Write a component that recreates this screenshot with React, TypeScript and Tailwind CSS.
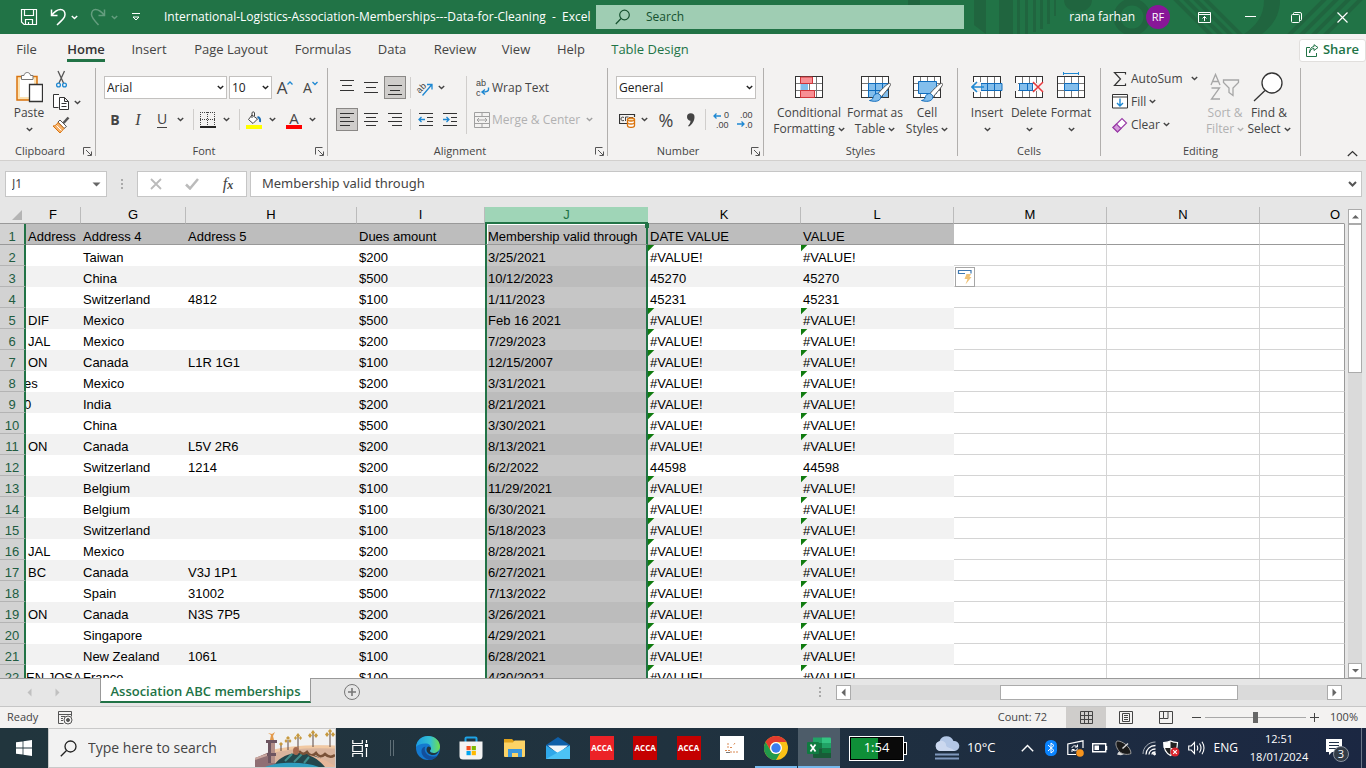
import type { ReactNode } from "react";

const UI = "font-['Open_Sans','Noto_Sans',sans-serif]";

type Row = { f?: string; g: string; h?: string; due: string; valid: string; date: string };

const ERR = "#VALUE!";

const ROWS: Row[] = [
  { g: "Taiwan", due: "$200", valid: "3/25/2021", date: ERR },
  { g: "China", due: "$500", valid: "10/12/2023", date: "45270" },
  { g: "Switzerland", h: "4812", due: "$100", valid: "1/11/2023", date: "45231" },
  { f: "DIF", g: "Mexico", due: "$500", valid: "Feb 16 2021", date: ERR },
  { f: "JAL", g: "Mexico", due: "$200", valid: "7/29/2023", date: ERR },
  { f: "ON", g: "Canada", h: "L1R 1G1", due: "$100", valid: "12/15/2007", date: ERR },
  { f: "es", g: "Mexico", due: "$200", valid: "3/31/2021", date: ERR },
  { f: "0", g: "India", due: "$200", valid: "8/21/2021", date: ERR },
  { g: "China", due: "$500", valid: "3/30/2021", date: ERR },
  { f: "ON", g: "Canada", h: "L5V 2R6", due: "$200", valid: "8/13/2021", date: ERR },
  { g: "Switzerland", h: "1214", due: "$200", valid: "6/2/2022", date: "44598" },
  { g: "Belgium", due: "$100", valid: "11/29/2021", date: ERR },
  { g: "Belgium", due: "$100", valid: "6/30/2021", date: ERR },
  { g: "Switzerland", due: "$100", valid: "5/18/2023", date: ERR },
  { f: "JAL", g: "Mexico", due: "$200", valid: "8/28/2021", date: ERR },
  { f: "BC", g: "Canada", h: "V3J 1P1", due: "$200", valid: "6/27/2021", date: ERR },
  { g: "Spain", h: "31002", due: "$500", valid: "7/13/2022", date: ERR },
  { f: "ON", g: "Canada", h: "N3S 7P5", due: "$200", valid: "3/26/2021", date: ERR },
  { g: "Singapore", due: "$200", valid: "4/29/2021", date: ERR },
  { g: "New Zealand", h: "1061", due: "$100", valid: "6/28/2021", date: ERR },
  { f: "EN JOSA", g: "France", due: "$100", valid: "4/30/2021", date: ERR },
];

// text that runs in from the column scrolled off on the left
const SPILL: Record<string, string> = { es: "-ml-1", "0": "-ml-1", "EN JOSA": "-ml-0.5" };

function Chevron({ className = "text-[#444]" }: { className?: string }) {
  return (
    <svg width="7" height="5" viewBox="0 0 7 5" className={`shrink-0 ${className}`}>
      <path d="M.8 .9 3.5 3.5 6.2 .9" fill="none" stroke="currentColor" strokeWidth="1.4" />
    </svg>
  );
}

function Tri({ d, className = "text-[#666]" }: { d: string; className?: string }) {
  return (
    <svg width="9" height="9" viewBox="0 0 9 9" className={className}>
      <path d={d} fill="currentColor" />
    </svg>
  );
}

const UP = "M1 6.5h7L4.500 3z";
const DOWN = "M1 3h7L4.500 6.500z";
const LEFT = "M6.500 .5v8L2.500 4.500z";
const RIGHT = "M2.500 .5v8L6.500 4.500z";

function Launcher() {
  return (
    <button aria-label="More options" className="text-[#555]">
      <svg width="9" height="9" viewBox="0 0 9 9" fill="none" stroke="currentColor">
        <path d="M.5 7.500V.5H7.500M3 3l5 5M8.500 4.500v4h-4" />
      </svg>
    </button>
  );
}

function Group({
  title,
  width,
  launcher,
  children,
}: {
  title: string;
  width: string;
  launcher?: boolean;
  children: ReactNode;
}) {
  return (
    <>
      <section className={`flex shrink-0 flex-col ${width}`}>
        <div className="h-[78px]">{children}</div>
        <div className="flex h-[17px] shrink-0 items-center text-[11px]">
          <span className="flex-1 text-center">{title}</span>
          {launcher && (
            <span className="mr-px flex w-[14px] justify-center">
              <Launcher />
            </span>
          )}
        </div>
      </section>
      <div className="mt-0.5 h-[88px] w-px shrink-0 bg-[#b1afad]" />
    </>
  );
}

function Big({
  icon,
  top,
  bottom = "",
  width,
  muted,
}: {
  icon: ReactNode;
  top: string;
  bottom?: string;
  width: string;
  muted?: boolean;
}) {
  return (
    <button
      className={`flex shrink-0 flex-col items-center pt-[5px] leading-4 whitespace-nowrap ${width} ${muted ? "text-[#b1b1b1]" : ""}`}
    >
      <span className="flex h-[34px] items-center">{icon}</span>
      <span>{top}</span>
      <span className={`flex h-4 items-center ${bottom ? "gap-[3px]" : ""}`}>
        {bottom}
        <Chevron className={muted ? "text-[#b1b1b1]" : "text-[#444]"} />
      </span>
    </button>
  );
}

function Tool({
  label,
  width = "w-6",
  active,
  children,
}: {
  label: string;
  width?: string;
  active?: boolean;
  children: ReactNode;
}) {
  return (
    <button
      aria-label={label}
      className={`flex h-[23px] shrink-0 items-center justify-center ${width} ${active ? "border border-[#8a8886] bg-[#cfcdcb]" : ""}`}
    >
      {children}
    </button>
  );
}

function Sep() {
  return <div className="h-[21px] w-px shrink-0 bg-[#d0cecc]" />;
}

function Combo({ label, value, width }: { label: string; value: string; width: string }) {
  return (
    <div className={`relative h-[23px] shrink-0 border border-[#c3c1bf] bg-white ${width}`}>
      <select
        aria-label={label}
        defaultValue={value}
        className="block h-full w-full appearance-none pl-0.5 text-xs text-[#222] outline-none"
      >
        <option>{value}</option>
      </select>
      <span className="pointer-events-none absolute top-0 right-0.5 flex h-full items-center">
        <Chevron className="text-[#222]" />
      </span>
    </div>
  );
}

function Lines({ d }: { d: string }) {
  return (
    <svg width="16" height="16" viewBox="0 0 16 16" stroke="#333" shapeRendering="crispEdges">
      <path d={d} fill="none" />
    </svg>
  );
}

// lettering that is part of a toolbar icon
function Glyph({ x, y, children, ...rest }: { x: number; y: number; children: string; transform?: string }) {
  return (
    <text x={x} y={y} fontSize="9" fill="#444" className="font-['Liberation_Sans',sans-serif]" {...rest}>
      {children}
    </text>
  );
}

function TableGlyph({ children }: { children: ReactNode }) {
  return (
    <svg width="32" height="32" viewBox="0 0 32 32" fill="none" className="shrink-0">
      <rect x="2.500" y="4.500" width="27" height="21" fill="#fff" stroke="#333" />
      <path d="M9.500 5v20M16.500 5v20M23.500 5v20M3 11.500h26M3 18.500h26" stroke="#777" />
      {children}
    </svg>
  );
}

function Brush() {
  return (
    <g>
      <path d="M31 11.500c1.500.5 1 2-8.500 13l-3.500-3C27.500 12 30 11 31 11.500Z" fill="#fff" stroke="#555" />
      <path d="M18.500 21.500c2.500.5 4 2.500 3 5-1.500 3-6 3.500-11 2 3-.5 3-1.500 4-4 .7-2 2-3 4-3Z" fill="#83beec" stroke="#0f6cbd" />
    </g>
  );
}

function TitleArt() {
  return (
    <svg
      viewBox="0 0 458 34"
      className="pointer-events-none absolute top-0 right-0 h-[34px] w-[458px]"
      fill="#20653f"
    >
      <path d="M0 0h12v5H0zM66 0h12v34l-12-9zM91 0h14v34H91zM109 0h3v34h-3zM117 0h3v34h-3zM125 0h3v32h-3zM132 0h3v29h-3zM139 0h3v24h-3zM146 0h2v16h-2z" />
      <path d="M156 0a14 12 0 0 0 28 0z" />
      <circle cx="224" cy="17" r="15" fill="none" stroke="#20653f" strokeWidth="7" />
      <g stroke="#20653f" strokeWidth="4">
        <path d="M266-2l40 40M276-2l40 40M286-2l40 40M296-2l40 40" />
        <path d="M380 36l40-40M392 36l40-40M404 36l40-40M416 36l40-40" />
      </g>
      <path d="M372 0c0 16-8 26-18 34h-18c12-8 20-18 20-34z" />
    </svg>
  );
}

function TitleBar() {
  return (
    <header className="relative flex h-[34px] shrink-0 items-center bg-[#217346] text-xs text-white">
      <TitleArt />
      <div className="flex w-[596px] shrink-0 items-center">
        <button aria-label="Save" className="ml-5">
          <svg width="18" height="18" viewBox="0 0 18 18" fill="none" stroke="#fff" strokeWidth="1.200">
            <path d="M1.500 1.500h15v15H4L1.500 14zM4.500 1.500v6h9v-6M5.500 16.500v-5h7v5M8.500 16.500v-2.500" />
          </svg>
        </button>
        <button aria-label="Undo" className="ml-3 flex items-center gap-1">
          <svg width="17" height="18" viewBox="0 0 17 18" fill="none" stroke="#fff" strokeWidth="1.500">
            <path d="M1.500 1.500v6h6M1.500 7.500C5 3 8 1.500 10.500 1.500c3 0 4.500 2.500 4.500 5 0 3-2 5-8 10.500" />
          </svg>
          <Chevron className="text-white" />
        </button>
        <button aria-label="Redo" className="ml-3 flex items-center gap-1 opacity-30">
          <svg width="17" height="18" viewBox="0 0 17 18" fill="none" stroke="#fff" strokeWidth="1.500">
            <path d="M14.500 1.500v6h-6M14.500 7.500C11 3 8 1.500 5.500 1.500 3 1.500 1.500 4 1.500 6.500c0 3 2 5 7 10.500" />
          </svg>
          <Chevron className="text-white" />
        </button>
        <button aria-label="Customize toolbar" className="ml-3.5">
          <svg width="8" height="8" viewBox="0 0 8 8" fill="none" stroke="#fff">
            <path d="M0 .5h8M1 4l3 3 3-3z" />
          </svg>
        </button>
        <h1 className="ml-6 whitespace-pre">
          International-Logistics-Association-Memberships---Data-for-Cleaning{"  -  "}Excel
        </h1>
      </div>
      <label className="relative flex h-6 w-[368px] shrink-0 items-center bg-[#9fcdb3] text-[#16512f]">
        <svg width="16" height="16" viewBox="0 0 16 16" fill="none" stroke="#16512f" strokeWidth="1.200" className="ml-[19px]">
          <circle cx="9.500" cy="6" r="4.800" />
          <path d="M6 9.500.8 15" />
        </svg>
        <input
          aria-label="Search"
          placeholder="Search"
          className="ml-[15px] w-40 bg-transparent outline-none placeholder:text-[#16512f]"
        />
      </label>
      <div className="relative ml-auto flex shrink-0 items-center">
        <span>rana farhan</span>
        <button className="ml-[11px] h-6 w-6 rounded-full bg-[#881798] text-[11px]">RF</button>
        <button aria-label="Ribbon display options" className="ml-7">
          <svg width="13" height="11" viewBox="0 0 13 11" fill="none" stroke="#fff">
            <path d="M.5.5h12v10H.5zM.5 2.500h12M6.500 9V4.500M4.500 6.500l2-2 2 2" />
          </svg>
        </button>
        <button aria-label="Minimize" className="ml-[34px]">
          <svg width="11" height="11" viewBox="0 0 11 11" stroke="#fff">
            <path d="M0 4.500h11" />
          </svg>
        </button>
        <button aria-label="Restore" className="ml-[35px]">
          <svg width="11" height="11" viewBox="0 0 11 11" fill="none" stroke="#fff">
            <path d="M2.500 2.500v-1q0-1 1-1h5.500q1.500 0 1.500 1.500v5.500q0 1-1 1h-1" />
            <rect x=".5" y="2.500" width="8" height="8" rx="1" />
          </svg>
        </button>
        <button aria-label="Close" className="mr-[18px] ml-[35px]">
          <svg width="11" height="11" viewBox="0 0 11 11" stroke="#fff" strokeWidth="1.200">
            <path d="M.5.5l10 10M10.500.5l-10 10" />
          </svg>
        </button>
      </div>
    </header>
  );
}

const TABS = [
  ["File", "w-[49px]"],
  ["Home", "w-[70px]"],
  ["Insert", "w-14"],
  ["Page Layout", "w-[108px]"],
  ["Formulas", "w-[76px]"],
  ["Data", "w-[62px]"],
  ["Review", "w-16"],
  ["View", "w-[58px]"],
  ["Help", "w-[52px]"],
  ["Table Design", "w-[106px]"],
];

function Tabs() {
  return (
    <nav className="flex h-8 shrink-0 items-center pl-0.5 text-[13px]">
      {TABS.map(([name, width]) => (
        <button
          key={name}
          className={`relative h-8 shrink-0 whitespace-nowrap ${width} ${name === "Home" ? "font-semibold text-[#333]" : ""} ${name === "Table Design" ? "text-[#217346]" : ""}`}
        >
          {name}
          {name === "Home" && (
            <span className="absolute inset-x-4 bottom-1 h-[3px] bg-[#217346]" />
          )}
        </button>
      ))}
      <button className="ml-auto flex h-[23px] items-center gap-1 rounded-[3px] border border-[#e1dfdd] bg-white px-1.5 font-semibold text-[#217346]">
        <svg width="13" height="13" viewBox="0 0 13 13" fill="none" stroke="#217346">
          <path d="M4 3.500H.5v9h10V9M3.500 9C4 6 5.500 4.500 8 4.500V6.500L12 3.500 8 .7V2.500C5 3 3.500 5 3.500 9Z" />
        </svg>
        Share
      </button>
    </nav>
  );
}

function Ribbon() {
  return (
    <div className="flex h-[95px] shrink-0 border-b border-[#d2d0ce] text-xs">
      <Group title="Clipboard" width="w-[95px]" launcher>
        <div className="flex">
          <Big
            width="w-[38px] ml-[10px]"
            top="Paste"
            icon={
              <svg width="28" height="32" viewBox="0 0 28 32" fill="none">
                <path d="M2 4.500h20V28H2z" fill="#fce3b4" stroke="#d9730d" strokeWidth="1.500" />
                <path d="M5 7h14v18H5z" fill="#fff" />
                <path d="M6.500 7.500v-4H9c.5-4 6-4 6.500 0h2.500v4z" fill="#fff" stroke="#777" />
                <path d="M14.500 12.500h13v17h-13z" fill="#fff" stroke="#333" strokeWidth="1.300" />
              </svg>
            }
          />
          <div className="ml-1 flex flex-col gap-[5px] pt-1">
            <button aria-label="Cut">
              <svg width="18" height="18" viewBox="0 0 18 18" fill="none">
                <path d="M6 1l5.500 12M12.500 1L7 13" stroke="#555" strokeWidth="1.300" />
                <circle cx="6.500" cy="15" r="1.900" stroke="#1e88d2" strokeWidth="1.300" />
                <circle cx="12.500" cy="15" r="1.900" stroke="#1e88d2" strokeWidth="1.300" />
              </svg>
            </button>
            <button aria-label="Copy" className="flex items-center gap-1">
              <svg width="18" height="18" viewBox="0 0 18 18" fill="#fff" stroke="#333">
                <path d="M6.500 14.500h-5V1.500h5.500" />
                <path d="M7.500 4.500h5l4 4v8h-9zM12.500 4.500v4h4M9.500 10.500h5M9.500 13.500h5" />
              </svg>
              <Chevron />
            </button>
            <button aria-label="Format painter">
              <svg width="18" height="18" viewBox="0 0 18 18" fill="none">
                <path d="M16.500 1.500L11.500 7" stroke="#555" strokeWidth="2.500" />
                <path d="M8 4l6.500 6.500-2.500 2L6 6z" fill="#fff" stroke="#555" />
                <path d="M6 6.500l6 6L8 17 1 10c2 0 4-1.500 5-3.500Z" fill="#f6b26b" stroke="#d9730d" />
                <path d="M4.500 9.500l5 5" stroke="#fff" />
              </svg>
            </button>
          </div>
        </div>
      </Group>

      <Group title="Font" width="w-[231px]" launcher>
        <div className="flex flex-col gap-[9px] pt-[10px] pl-2">
          <div className="flex items-center">
            <Combo label="Font" value="Arial" width="w-[123px]" />
            <span className="w-0.5" />
            <Combo label="Font size" value="10" width="w-[43px]" />
            <Tool label="Grow font" width="w-[26px]">
              <span className="text-[17px] leading-none">A</span>
              <svg width="6" height="16" viewBox="0 0 6 16" fill="none" stroke="#1e88d2" strokeWidth="1.300">
                <path d="M.5 4.500L3 2l2.500 2.500" />
              </svg>
            </Tool>
            <Tool label="Shrink font" width="w-[25px]">
              <span className="text-sm leading-none">A</span>
              <svg width="6" height="16" viewBox="0 0 6 16" fill="none" stroke="#1e88d2" strokeWidth="1.300">
                <path d="M.5 2L3 4.500 5.500 2" />
              </svg>
            </Tool>
          </div>
          <div className="flex items-center">
            <Tool label="Bold" width="w-[22px]">
              <b className="text-sm">B</b>
            </Tool>
            <Tool label="Italic">
              <i className="font-['Liberation_Serif',serif] text-base">I</i>
            </Tool>
            <Tool label="Underline">
              <span className="border-b border-[#444] text-sm leading-4">U</span>
            </Tool>
            <Tool label="Underline style" width="w-3">
              <Chevron />
            </Tool>
            <span className="w-[7px]" />
            <Sep />
            <Tool label="Borders" width="w-7">
              <svg width="16" height="16" viewBox="0 0 16 16" fill="none" shapeRendering="crispEdges">
                <path d="M.5 0v15M7.500 0v15M14.500 0v15M0 .5h15M0 7.500h15" stroke="#444" strokeDasharray="1 1" />
                <path d="M0 15h16" stroke="#222" strokeWidth="2" />
              </svg>
            </Tool>
            <Tool label="Border style" width="w-2">
              <Chevron />
            </Tool>
            <span className="w-[9px]" />
            <Sep />
            <Tool label="Fill color" width="w-7">
              <svg width="17" height="18" viewBox="0 0 17 18" fill="none">
                <path d="M6 4l5.500 4L7 12.500 2.500 8.500zM6 7V2c0-1.500 2.500-1.500 2.500 0v3" fill="#fff" stroke="#444" />
                <path d="M11.500 6c2 .5 3 2 2.500 5" stroke="#1e6fb5" strokeWidth="2" />
                <path d="M0 14h16v4H0z" fill="#ff0" />
              </svg>
            </Tool>
            <Tool label="Fill color options" width="w-2">
              <Chevron />
            </Tool>
            <span className="w-1" />
            <Tool label="Font color" width="w-7">
              <span className="flex w-4 flex-col items-center border-b-4 border-[#f00] text-[15px] leading-[14px]">A</span>
            </Tool>
            <Tool label="Font color options" width="w-2">
              <Chevron />
            </Tool>
          </div>
        </div>
      </Group>

      <Group title="Alignment" width="w-[279px]" launcher>
        <div className="flex pt-[10px] pl-2">
          <div className="flex flex-col gap-[9px]">
            <div className="flex items-center">
              <Tool label="Top align" width="w-[22px]">
                <Lines d="M1 .5h14M3 5.500h10M1 10.500h14" />
              </Tool>
              <span className="w-0.5" />
              <Tool label="Middle align" width="w-[22px]">
                <Lines d="M1 2.500h14M3 7.500h10M1 12.500h14" />
              </Tool>
              <span className="w-0.5" />
              <Tool label="Bottom align" width="w-[22px]" active>
                <Lines d="M1 5.500h14M3 10.500h10M1 14.500h14" />
              </Tool>
              <span className="w-1" />
              <Sep />
              <Tool label="Orientation" width="w-[27px]">
                <svg width="18" height="18" viewBox="0 0 18 18" fill="none" className="overflow-visible">
                  <Glyph x={0} y={12} transform="rotate(-45 5 9)">
                    ab
                  </Glyph>
                  <path d="M6.500 16.500L15.500 6M11 5.500h5v5" stroke="#1e88d2" strokeWidth="1.300" />
                </svg>
              </Tool>
              <Chevron />
            </div>
            <div className="flex items-center">
              <Tool label="Align left" width="w-[22px]" active>
                <Lines d="M1 1.500h14M1 5.500h10M1 9.500h14M1 13.500h10" />
              </Tool>
              <span className="w-0.5" />
              <Tool label="Center" width="w-[22px]">
                <Lines d="M1 1.500h14M3 5.500h10M1 9.500h14M3 13.500h10" />
              </Tool>
              <span className="w-0.5" />
              <Tool label="Align right" width="w-[22px]">
                <Lines d="M1 1.500h14M5 5.500h10M1 9.500h14M5 13.500h10" />
              </Tool>
              <span className="w-1" />
              <Sep />
              <Tool label="Decrease indent" width="w-[30px]">
                <svg width="16" height="16" viewBox="0 0 16 16" fill="none" stroke="#333">
                  <path d="M1 1.500h14M9 5.500h6M9 9.500h6M1 13.500h14" />
                  <path d="M1 7.500h6M3.500 5l-2.500 2.500L3.500 10" stroke="#1e88d2" strokeWidth="1.300" />
                </svg>
              </Tool>
              <Tool label="Increase indent" width="w-[18px]">
                <svg width="16" height="16" viewBox="0 0 16 16" fill="none" stroke="#333">
                  <path d="M1 1.500h14M9 5.500h6M9 9.500h6M1 13.500h14" />
                  <path d="M1 7.500h6M4.500 5l2.500 2.500L4.500 10" stroke="#1e88d2" strokeWidth="1.300" />
                </svg>
              </Tool>
            </div>
          </div>
          <div className="ml-[7px] h-[58px] w-px bg-[#d0cecc]" />
          <div className="ml-[7px] flex flex-col gap-[9px]">
            <button className="flex h-[23px] items-center gap-0.5 whitespace-nowrap">
              <svg width="16" height="18" viewBox="0 0 16 18" fill="none" className="overflow-visible">
                <Glyph x={2} y={7}>
                  ab
                </Glyph>
                <Glyph x={2} y={17}>
                  c
                </Glyph>
                <path d="M14.500 8.500v2c0 1.500-1 2.500-6 2.500M11 10.500L8 13l3 2.500" stroke="#1e88d2" strokeWidth="1.400" />
              </svg>
              Wrap Text
            </button>
            <button className="flex h-[23px] items-center gap-0.5 whitespace-nowrap text-[#b1b1b1]">
              <svg width="16" height="16" viewBox="0 0 16 16" fill="none" stroke="#a0a0a0">
                <path d="M.5.500h15v15H.5zM.5 4.500h15M.5 11.500h15M8 .5v4M8 11.500v4M3 8h10M5 6L3 8l2 2M11 6l2 2-2 2" />
              </svg>
              Merge &amp; Center
              <span className="ml-1">
                <Chevron className="text-[#a0a0a0]" />
              </span>
            </button>
          </div>
        </div>
      </Group>

      <Group title="Number" width="w-[155px]" launcher>
        <div className="flex flex-col gap-[9px] pt-[10px] pl-2">
          <Combo label="Number format" value="General" width="w-[140px]" />
          <div className="flex items-center">
            <Tool label="Accounting format" width="w-[22px]">
              <svg width="17" height="16" viewBox="0 0 17 16" fill="none">
                <path d="M8 11.500H.5v-9h15V5" stroke="#333" strokeWidth="1.200" />
                <path d="M5 5.500c-2-1-3 0-3 1.500S3 9 5 8.500M6.500 9V5h3M10 5.500h4" stroke="#444" />
                <path d="M8.500 7.500v6c0 2.500 7 2.500 7 0v-6" fill="#fff" stroke="#d9730d" strokeWidth="1.300" />
                <ellipse cx="12" cy="7.500" rx="3.500" ry="1.500" fill="#fce3b4" stroke="#d9730d" strokeWidth="1.300" />
                <path d="M8.500 10.500c0 2 7 2 7 0" stroke="#d9730d" strokeWidth="1.300" />
              </svg>
            </Tool>
            <Tool label="Accounting options" width="w-3">
              <Chevron />
            </Tool>
            <span className="w-0.5" />
            <Tool label="Percent style" width="w-7">
              <span className="text-lg leading-none">%</span>
            </Tool>
            <Tool label="Comma style" width="w-[22px]">
              <svg width="10" height="14" viewBox="0 0 10 14" fill="#444">
                <path d="M1 4a3.700 3.700 0 0 1 7.500 0c0 4-2.500 7.500-5.500 9.500L2 13c1.500-1.500 2.500-3.500 2.500-5.300C2.500 7.700 1 6 1 4Z" />
              </svg>
            </Tool>
            <span className="w-[3px]" />
            <Sep />
            <Tool label="Increase decimal" width="w-[30px]">
              <svg width="17" height="18" viewBox="0 0 17 18" fill="none" className="overflow-visible">
                <path d="M1 5h7M3.500 2.500L1 5l2.500 2.500" stroke="#1e88d2" strokeWidth="1.300" />
                <Glyph x={11} y={7}>
                  0
                </Glyph>
                <Glyph x={3} y={17}>
                  .00
                </Glyph>
              </svg>
            </Tool>
            <Tool label="Decrease decimal" width="w-[18px]">
              <svg width="17" height="18" viewBox="0 0 17 18" fill="none" className="overflow-visible">
                <path d="M0 13h7M4.500 10.500L7 13l-2.500 2.500" stroke="#1e88d2" strokeWidth="1.300" />
                <Glyph x={3} y={7}>
                  .00
                </Glyph>
                <Glyph x={8} y={17}>
                  .0
                </Glyph>
              </svg>
            </Tool>
          </div>
        </div>
      </Group>

      <Group title="Styles" width="w-[193px]">
        <div className="flex pl-[9px]">
          <Big
            width="w-[72px]"
            top="Conditional"
            bottom="Formatting"
            icon={
              <TableGlyph>
                <path d="M7.500 5h12v6.500h-12zM7.500 18.500h14V25.500h-14z" fill="#f88f94" stroke="#d13438" />
                <path d="M7.500 12h7.500v6H7.500z" fill="#83beec" />
              </TableGlyph>
            }
          />
          <Big
            width="w-[60px]"
            top="Format as"
            bottom="Table"
            icon={
              <TableGlyph>
                <path d="M10 12h19v13H10z" fill="#83beec" />
                <path d="M9.500 11.500h20M9.500 18.500h20M9.500 11.500v14M16.500 11.500v14M23.500 11.500v14" stroke="#0f6cbd" />
                <Brush />
              </TableGlyph>
            }
          />
          <Big
            width="w-11"
            top="Cell"
            bottom="Styles"
            icon={
              <TableGlyph>
                <path d="M7.500 9.500h18v12h-18z" fill="#83beec" stroke="#0f6cbd" />
                <Brush />
              </TableGlyph>
            }
          />
        </div>
      </Group>

      <Group title="Cells" width="w-[142px]">
        <div className="flex pl-2">
          <Big
            width="w-[42px]"
            top="Insert"
            icon={
              <TableGlyph>
                <path d="M10 11.500h21v7H10zM16.500 11.500v7M23.500 11.500v7" fill="#83beec" stroke="#0f6cbd" />
                <path d="M0 10h10v10H0z" fill="#f3f2f1" />
                <path d="M1 15h12M6 10l-5 5 5 5" stroke="#1e88d2" strokeWidth="1.600" />
              </TableGlyph>
            }
          />
          <Big
            width="w-[42px]"
            top="Delete"
            icon={
              <TableGlyph>
                <path d="M1 11h4v8H1zM21 11h11v8H21z" fill="#f3f2f1" />
                <path d="M6.500 11.500h13v7h-13zM14.500 11.500v7" fill="#83beec" stroke="#0f6cbd" />
                <path d="M20 10l10 10M30 10L20 20" stroke="#e8383d" strokeWidth="1.500" />
              </TableGlyph>
            }
          />
          <Big
            width="w-[42px]"
            top="Format"
            icon={
              <TableGlyph>
                <path d="M9.500 11.500h14v7h-14z" fill="#83beec" stroke="#0f6cbd" />
                <path d="M8.500 1.500h15M8.500 0v3M23.500 0v3" stroke="#1e88d2" />
              </TableGlyph>
            }
          />
        </div>
      </Group>

      <Group title="Editing" width="w-[199px]">
        <div className="flex">
          <div className="flex w-[98px] flex-col pt-px pl-[11px]">
            <button className="flex h-[23px] items-center whitespace-nowrap">
              <svg width="16" height="16" viewBox="0 0 16 16" fill="none" stroke="#333" strokeWidth="1.200">
                <path d="M13.500 3.500v-2h-11L8.500 8l-6 6.500h11v-2" />
              </svg>
              <span className="ml-[3px]">AutoSum</span>
              <span className="ml-2">
                <Chevron />
              </span>
            </button>
            <button className="flex h-[23px] items-center gap-[3px] whitespace-nowrap">
              <svg width="16" height="15" viewBox="0 0 16 15" fill="none">
                <path d="M.5.500h15v13.500H.5zM.5 3h15" fill="#fff" stroke="#333" />
                <path d="M8 4.500V12M5 9l3 3 3-3" stroke="#1e88d2" strokeWidth="1.400" />
              </svg>
              Fill
              <Chevron />
            </button>
            <button className="flex h-[23px] items-center gap-[3px] whitespace-nowrap">
              <svg width="16" height="16" viewBox="0 0 16 16" fill="#fff" stroke="#9b3fa8" strokeWidth="1.200">
                <path d="M1 10.500L10 1.500l4.500 4.500-9 9z" />
                <path d="M1 10.500L4.500 7 9 11.500 5.500 15z" fill="#d59bdc" />
              </svg>
              Clear
              <Chevron />
            </button>
          </div>
          <Big
            width="w-12 ml-[2px]"
            top="Sort &"
            bottom="Filter"
            muted
            icon={
              <svg width="32" height="32" viewBox="0 0 32 32" fill="none" stroke="#a6a6a6" strokeWidth="1.300">
                <path d="M2 13L6.500 2.500 11 13M3.500 9.500h6M2.500 16h8L2.500 27h8.500" />
                <path d="M14.500 8h15v2.500l-5.500 5.500v7.500l-4-3v-4.500L14.500 10.500z" />
              </svg>
            }
          />
          <Big
            width="w-11 -ml-0.5"
            top="Find &"
            bottom="Select"
            icon={
              <svg width="32" height="32" viewBox="0 0 32 32" fill="none" stroke="#333" strokeWidth="1.300">
                <circle cx="19" cy="11" r="10" fill="#fff" />
                <path d="M12 18.500L1 29" />
              </svg>
            }
          />
        </div>
      </Group>
      <button aria-label="Collapse ribbon" className="mt-auto mr-2 mb-[3px] ml-auto">
        <svg width="11" height="7" viewBox="0 0 11 7" fill="none" stroke="#333" strokeWidth="1.200">
          <path d="M.8 6l4.700-4.500L10.200 6" />
        </svg>
      </button>
    </div>
  );
}

function Dots() {
  return (
    <span className="flex flex-col gap-0.5">
      <i className="h-0.5 w-0.5 bg-[#aaa]" />
      <i className="h-0.5 w-0.5 bg-[#aaa]" />
      <i className="h-0.5 w-0.5 bg-[#aaa]" />
    </span>
  );
}

function FormulaBar() {
  return (
    <div className="flex h-[46px] shrink-0 items-start pt-[10px] pr-1 pl-[5px] font-['Noto_Sans',sans-serif]">
      <div className="flex h-[26px] w-[102px] items-center border border-[#c6c6c6] bg-white">
        <input
          aria-label="Name box"
          defaultValue="J1"
          className="ml-1.5 w-20 bg-transparent text-xs text-[#444] outline-none"
        />
        <Tri d="M.5 2.500h8L4.500 6.500z" />
      </div>
      <div className="flex h-[26px] w-[30px] items-center justify-center">
        <Dots />
      </div>
      <div className="flex h-[26px] w-[110px] items-center border border-[#c6c6c6] bg-white">
        <button aria-label="Cancel" className="flex w-9 justify-center">
          <svg width="12" height="12" viewBox="0 0 12 12" stroke="#bbb" strokeWidth="1.800">
            <path d="M1 1l10 10M11 1L1 11" />
          </svg>
        </button>
        <button aria-label="Enter" className="flex w-9 justify-center">
          <svg width="14" height="12" viewBox="0 0 14 12" fill="none" stroke="#bbb" strokeWidth="2.500">
            <path d="M1 6.500l4 4L13 1" />
          </svg>
        </button>
        <button
          aria-label="Insert function"
          className="flex w-9 items-baseline justify-center font-['Liberation_Serif',serif] text-base leading-none text-[#444] italic"
        >
          f<span className="text-xs font-bold">x</span>
        </button>
      </div>
      <div className="ml-[3px] flex h-[26px] flex-1 items-center border border-[#c6c6c6] bg-white pr-1">
        <input
          aria-label="Formula bar"
          defaultValue="Membership valid through"
          className="ml-[11px] flex-1 bg-transparent text-[13px] text-[#444] outline-none"
        />
        <svg width="9" height="7" viewBox="0 0 9 7" fill="none" stroke="#555" strokeWidth="2">
          <path d="M1 1l3.500 3.500L8 1" />
        </svg>
      </div>
    </div>
  );
}

const COLS = [
  ["F", "w-[55px]"],
  ["G", "w-[105px]"],
  ["H", "w-[171px]"],
  ["I", "w-[128px]"],
  ["J", "w-[163px]"],
  ["K", "w-[153px]"],
  ["L", "w-[153px]"],
  ["M", "w-[153px]"],
  ["N", "w-[153px]"],
  ["O", ""],
];

const HEADS = ["Address", "Address 4", "Address 5", "Dues amount", "Membership valid through", "DATE VALUE", "VALUE"];

function Cell({ children, className = "" }: { children?: ReactNode; className?: string }) {
  return (
    <td className={`h-[21px] overflow-hidden p-0 align-top ${className}`}>
      <div className="h-5 pt-1 pl-0.5 leading-[17px] whitespace-nowrap">{children}</div>
    </td>
  );
}

function RowNumber({ n }: { n: number }) {
  return (
    <th
      scope="row"
      className={`h-[21px] border-r-2 border-b border-r-[#217346] bg-[#d2d2d2] p-0 align-top font-normal text-[#215c41] ${n === 1 ? "border-b-[#999]" : "border-b-[#b4b4b4]"}`}
    >
      <div className="h-5 pt-1 text-center leading-[17px]">{n}</div>
    </th>
  );
}

function EmptyCells({ head }: { head?: boolean }) {
  const line = head ? "border-b-[#999]" : "border-b-[#d4d4d4]";
  return (
    <>
      <Cell className={`border-r border-b border-r-[#d4d4d4] bg-white ${line}`} />
      <Cell className={`border-r border-b border-r-[#d4d4d4] bg-white ${line}`} />
      <Cell className={`border-r border-b border-r-[#999] bg-white ${line}`} />
    </>
  );
}

function ErrCell({ value, bg }: { value: string; bg: string }) {
  const mark =
    value === ERR ? "bg-[linear-gradient(135deg,#0f7b0f_4px,transparent_5px)]" : "";
  return <Cell className={`${bg} ${mark}`}>{value}</Cell>;
}

function Sheet() {
  return (
    <div className="flex min-h-0 flex-1">
      <div className="relative min-w-0 flex-1 overflow-hidden">
        <table className="w-full table-fixed border-separate border-spacing-0 font-['Liberation_Sans',Arial,sans-serif] text-[13px] text-black">
          <thead>
            <tr>
              <th className="h-[17px] w-[26px] border-b border-[#999] p-0">
                <svg width="10" height="10" viewBox="0 0 10 10" className="ml-3">
                  <path d="M10 0v10H0z" fill="#b4b4b4" />
                </svg>
              </th>
              {COLS.map(([name, width]) => (
                <th
                  key={name}
                  scope="col"
                  className={`h-[17px] border-b p-0 leading-4 font-normal ${width} ${
                    name === "J"
                      ? "border-[#217346] bg-[#9fd5b7] text-[#217346] shadow-[inset_0_-1px_0_#217346]"
                      : "border-r border-r-[#bbb] border-b-[#999]"
                  } ${name === "O" ? "border-r-transparent pr-1 text-right" : "text-center"}`}
                >
                  {name}
                </th>
              ))}
            </tr>
          </thead>
          <tbody>
            <tr>
              <RowNumber n={1} />
              {HEADS.map((text) => (
                <Cell
                  key={text}
                  className={
                    text === "Membership valid through"
                      ? "border-x-2 border-b border-x-[#217346] border-b-[#999] bg-[#bdbdbd] shadow-[inset_1px_1px_0_#fff] [&>div]:pl-px"
                      : "border-b border-[#999] bg-[#bdbdbd]"
                  }
                >
                  {text}
                </Cell>
              ))}
              <EmptyCells head />
            </tr>
            {ROWS.map((row, i) => {
              const bg = i % 2 ? "bg-[#f2f2f2]" : "bg-white";
              const sel = i % 2 ? "bg-[#bcbcbc]" : "bg-[#c6c6c6]";
              return (
                <tr key={i}>
                  <RowNumber n={i + 2} />
                  <Cell className={bg}>
                    {row.f && <span className={`inline-block ${SPILL[row.f] ?? ""}`}>{row.f}</span>}
                  </Cell>
                  <Cell className={bg}>{row.g}</Cell>
                  <Cell className={bg}>{row.h}</Cell>
                  <Cell className={bg}>{row.due}</Cell>
                  <Cell className={`border-x-2 border-[#217346] [&>div]:pl-px ${sel}`}>{row.valid}</Cell>
                  <ErrCell value={row.date} bg={bg} />
                  <ErrCell value={row.date} bg={bg} />
                  <EmptyCells />
                </tr>
              );
            })}
          </tbody>
        </table>
        <span className="absolute top-4 left-[645px] h-[5px] w-1 bg-[#217346]" />
        <button
          aria-label="Flash fill options"
          className="absolute top-[60px] left-[955px] flex h-5 w-5 items-center justify-center border border-[#a6a6a6] bg-white"
        >
          <svg width="16" height="16" viewBox="0 0 16 16" fill="none" className="shrink-0">
            <path d="M14 4.500V1.500H1.500v3H8" stroke="#3f78b0" strokeWidth="1.200" />
            <path d="M9.500 5h4.500L12.500 8h2l-6 7.500 2-5.500H7.500z" fill="#efc277" />
          </svg>
        </button>
      </div>
      <div className="flex w-[21px] shrink-0 flex-col pt-0.5 pr-1 pl-[3px]">
        <button aria-label="Scroll up" className="flex h-[15px] items-center justify-center border border-[#ababab] bg-white">
          <Tri d={UP} />
        </button>
        <div className="flex-1 bg-[#dadada]">
          <div className="h-[149px] border border-[#ababab] bg-white" />
        </div>
        <button aria-label="Scroll down" className="flex h-[15px] items-center justify-center border border-[#ababab] bg-white">
          <Tri d={DOWN} />
        </button>
      </div>
    </div>
  );
}

function SheetTabs() {
  return (
    <div className="flex h-7 shrink-0 items-start border-t border-[#999]">
      <div className="flex h-[26px] w-[100px] items-center gap-[19px] pl-[25px]">
        <Tri d={LEFT} className="text-[#c0c0c0]" />
        <Tri d={RIGHT} className="text-[#c0c0c0]" />
      </div>
      <button className="-mt-px h-[25px] w-[211px] shrink-0 border-x border-b-2 border-x-[#999] border-b-[#217346] bg-white pt-px text-[13px] leading-6 font-semibold whitespace-nowrap text-[#217346]">
        Association ABC memberships
      </button>
      <button aria-label="New sheet" className="mt-[5px] ml-[33px]">
        <svg width="16" height="16" viewBox="0 0 16 16" fill="none" stroke="#777">
          <circle cx="8" cy="8" r="7.500" />
          <path d="M8 4v8M4 8h8" strokeWidth="1.600" />
        </svg>
      </button>
      <div className="ml-auto flex h-[26px] items-center pr-6">
        <Dots />
        <button aria-label="Scroll left" className="ml-[15px] flex h-[15px] w-[15px] items-center justify-center border border-[#ababab] bg-white">
          <Tri d={LEFT} />
        </button>
        <div className="h-[15px] w-[476px] bg-[#dadada] pl-[149px]">
          <div className="h-[15px] w-[238px] border border-[#ababab] bg-white" />
        </div>
        <button aria-label="Scroll right" className="flex h-[15px] w-[15px] items-center justify-center border border-[#ababab] bg-white">
          <Tri d={RIGHT} />
        </button>
      </div>
    </div>
  );
}

function StatusBar() {
  return (
    <div className="flex h-[22px] shrink-0 items-center border-t border-[#c6c6c6] bg-[#f3f2f1] pl-[7px] text-[11px]">
      <span>Ready</span>
      <button aria-label="Record macro" className="ml-5">
        <svg width="15" height="14" viewBox="0 0 15 14" fill="none" stroke="#555">
          <path d="M5.500 12.500h-5v-12h13v5M.5 3.500h13M3 5.500h4M3 7.500h2M3 9.500h2" />
          <circle cx="10" cy="9" r="4" />
          <circle cx="10" cy="9" r="1.500" fill="#555" />
        </svg>
      </button>
      <span className="mr-[19px] ml-auto">Count: 72</span>
      <button aria-label="Normal view" className="flex h-[21px] w-10 items-center justify-center bg-[#cfcdcb]">
        <svg width="13" height="13" viewBox="0 0 13 13" fill="none" stroke="#444">
          <path d="M.5.500h12v12H.5zM4.500.5v12M8.500.5v12M.5 4.500h12M.5 8.500h12" />
        </svg>
      </button>
      <button aria-label="Page layout view" className="flex w-10 justify-center">
        <svg width="14" height="13" viewBox="0 0 14 13" fill="none" stroke="#444">
          <path d="M.5.500h13v12H.5zM3.500 2.500h7v8h-7zM5 4.500h4M5 6.500h4M5 8.500h4" />
        </svg>
      </button>
      <button aria-label="Page break view" className="flex w-10 justify-center">
        <svg width="14" height="13" viewBox="0 0 14 13" fill="none" stroke="#444">
          <path d="M.5.500h13v12H.5zM4.500.5v7h4.500v-7M.5 7.500H4.500" />
        </svg>
      </button>
      <button aria-label="Zoom out" className="ml-1.5">
        <svg width="9" height="9" viewBox="0 0 9 9" stroke="#444">
          <path d="M0 4.500h9" />
        </svg>
      </button>
      <input
        type="range"
        aria-label="Zoom"
        defaultValue={50}
        className="mx-1 h-3 w-[101px] appearance-none bg-[linear-gradient(#a8a8a8,#a8a8a8)] bg-[length:100%_1px] bg-center bg-no-repeat [&::-webkit-slider-thumb]:h-[11px] [&::-webkit-slider-thumb]:w-[5px] [&::-webkit-slider-thumb]:appearance-none [&::-webkit-slider-thumb]:bg-[#666]"
      />
      <button aria-label="Zoom in">
        <svg width="9" height="9" viewBox="0 0 9 9" stroke="#444">
          <path d="M0 4.500h9M4.500 0v9" />
        </svg>
      </button>
      <span className="w-[47px] pr-2 text-right">100%</span>
    </div>
  );
}

function Bridge() {
  return (
    <svg width="80" height="38" viewBox="0 0 80 38" fill="none">
      <path d="M0 38V29c8-2 12-6 20-8 18-4 40-5 60-4v21z" fill="#d9b49d" />
      <path d="M0 29c6-2 12-6 20-7v16H0z" fill="#8f6f74" />
      <path d="M0 30c6-2 12-5 20-6" stroke="#c9a7a0" strokeWidth="2" />
      <path d="M18 38c4-8 14-14 26-14 14 0 24 5 30 14z" fill="#24474c" />
      <path d="M30 32l7-7M39 33l8-8M49 34l5-6" stroke="#3f8f8e" strokeWidth="2" />
      <path d="M10 38c12-5 38-6 54 0z" fill="#2f9fc0" />
      <path d="M14 23c20-5 44-6 66-5" stroke="#f1c9a3" strokeWidth="3" />
      <path d="M44 22q4 5 8 1 4 6 9 1 4 6 9 1 5 5 10 1" stroke="#7a5238" strokeWidth="2.500" />
      <path d="M54 26c10 2 18 6 26 11v1H70c-4-5-9-9-16-12z" fill="#e6b79a" />
      <path d="M13 13h7v21h-7z" fill="#b38f88" />
      <path d="M13 13h3v21h-3z" fill="#6d5560" />
      <path d="M11 11h11v3H11zM12 24h9v3h-9z" fill="#6d5560" />
      <path d="M15 11l1-5-3-2 4 1 3-2-2 4 1 4z" fill="#e39a4c" />
      <g stroke="#5b4740">
        <path d="M26 15v7M33 11v10M43 8v12M58 5v13M75 4v14" />
      </g>
      <g fill="#c79a3f">
        <path d="M26 13l2 2-2 2-2-2zM33 7l2 2-2 2-2-2zM31 10l1.500 2-1.500 2-1.500-2zM35 10l1.500 2-1.500 2-1.500-2z" />
        <path d="M43 4l2 2.500L43 9l-2-2.500zM40.500 7l1.500 2-1.500 2L39 9zM45.500 7L47 9l-1.500 2L44 9z" />
        <path d="M58 1l2 2.500L58 6l-2-2.500zM55 4l2 2.500L55 9l-2-2.500zM61 4l2 2.500L61 9l-2-2.500z" />
        <path d="M75 0l2 2-2 3-2-3zM72 3l2 2.500L72 8l-2-2.500zM78 3l2 2.500L78 8l-2-2.500z" />
      </g>
      <ellipse cx="41" cy="22" rx="3" ry="4" fill="#a5694f" />
    </svg>
  );
}

function Acca({ className }: { className: string }) {
  return (
    <span className={`flex h-6 w-6 items-center justify-center text-[8px] font-bold text-white ${className}`}>
      ACCA
    </span>
  );
}

const APPS: { name: string; icon: ReactNode; className?: string }[] = [
  {
    name: "Edge",
    icon: (
      <svg width="24" height="24" viewBox="0 0 24 24">
        <defs>
          <linearGradient id="edgeTop" x1="0" x2="1">
            <stop offset="0" stopColor="#1b9de2" />
            <stop offset=".6" stopColor="#35c1d0" />
            <stop offset="1" stopColor="#6fe04b" />
          </linearGradient>
        </defs>
        <circle cx="12" cy="12" r="12" fill="#1479cf" />
        <path d="M0 11C.5 4.500 5.500 0 12 0c7 0 12 5 12 10.500 0 4-3 6.500-6.500 6.500-2 0-3.500-.8-3.500-2 0-1 1-1 1-3.200C15 9.500 13 7.500 9.500 7.500 5 7.500 1.500 9 0 11Z" fill="url(#edgeTop)" />
        <path d="M9.500 10.500C8 12 8 19 16 20.500c2 .3 4.500-.3 6-1.500-2.200 3-5.500 5-9 5-4.500-1.500-8-5-7.500-9.500.2-2 2-3.700 4-4Z" fill="#134f9c" />
        <path d="M14 15c0 1.200 1.500 2 3.500 2 2.300 0 4.200-1 5.400-2.600C22 17 20 19 17 19c-3.500 0-6.500-2.500-6.500-5.500 0-1.500 1-3 2-3 1.500 0 2.500 1 2.500 2S14 14 14 15Z" fill="#21363f" />
      </svg>
    ),
  },
  {
    name: "Store",
    icon: (
      <svg width="24" height="24" viewBox="0 0 24 24">
        <path d="M6.500 6V2.500q0-1 1-1h9q1 0 1 1V6" fill="none" stroke="#1ea3e6" strokeWidth="2" />
        <path d="M.5 5.500h23V20q0 3.500-3.500 3.500H4Q.5 23.500.5 20z" fill="#f3f3f3" />
        <path d="M7.500 10h4.200v4.200H7.500z" fill="#f25022" />
        <path d="M12.700 10h4.200v4.200h-4.200z" fill="#7fba00" />
        <path d="M7.500 15h4.200v4.200H7.500z" fill="#00a4ef" />
        <path d="M12.700 15h4.200v4.200h-4.200z" fill="#ffb900" />
      </svg>
    ),
  },
  {
    name: "File Explorer",
    icon: (
      <svg width="24" height="24" viewBox="0 0 24 24">
        <path d="M1 3h8l2 2v3H1z" fill="#e0a21b" />
        <path d="M1 6.500h9l1.500-2H22V20q0 1-1 1H2q-1 0-1-1z" fill="#fcd366" />
        <path d="M5 13h14v8h-4v-4H9v4H5z" fill="#3b97dd" />
      </svg>
    ),
  },
  {
    name: "Mail",
    icon: (
      <svg width="24" height="24" viewBox="0 0 24 24">
        <path d="M0 9L12 1l12 8v3H0z" fill="#0f5fa8" />
        <path d="M2 9.500h20L12 18z" fill="#f2f6fa" />
        <path d="M0 9.500L12 17l12-7.500V23H0z" fill="#2fa8ea" />
        <path d="M0 23L24 9.500V23z" fill="#4cc2f5" />
      </svg>
    ),
  },
  { name: "ACCA", icon: <Acca className="bg-[#ec2227]" /> },
  { name: "ACCA study", icon: <Acca className="bg-[#c40000]" /> },
  { name: "ACCA exams", icon: <Acca className="bg-[#c40000]" /> },
  {
    name: "Website",
    icon: (
      <svg width="24" height="24" viewBox="0 0 24 24">
        <path d="M0 0h24v24H0z" fill="#fff" />
        <path d="M8 7v5M10 11.500h3M15 7l-1.500 2M5 14.500h5M10 16h9" stroke="#d98a55" strokeDasharray="2 1" />
        <path d="M6 16.500h4" stroke="#777" />
      </svg>
    ),
  },
  {
    name: "Chrome",
    className: "border-b-2 border-[#76b9ed] pt-0.5",
    icon: (
      <svg width="24" height="24" viewBox="0 0 24 24">
        <circle cx="12" cy="12" r="12" fill="#fbc116" />
        <path d="M1.600 6A12 12 0 0 1 22.400 6H12a6 6 0 0 0-5.200 9z" fill="#e33b2e" />
        <path d="M1.600 6A12 12 0 0 0 12 24l5.200-9A6 6 0 0 1 6.800 15z" fill="#229a4b" />
        <circle cx="12" cy="12" r="6" fill="#fff" />
        <circle cx="12" cy="12" r="4.700" fill="#3b7ded" />
      </svg>
    ),
  },
  {
    name: "Excel",
    className: "border-b-2 border-[#76b9ed] bg-[#4d5c69] pt-0.5",
    icon: (
      <svg width="24" height="24" viewBox="0 0 24 24">
        <path d="M6 1.500h9V8H6z" fill="#21a366" />
        <path d="M15 1.500h8q1 0 1 1V8h-9z" fill="#33c481" />
        <path d="M6 7h9v5.500H6z" fill="#107c41" />
        <path d="M15 7h9v5.500h-9z" fill="#21a366" />
        <path d="M6 12.500h18V22H7q-1 0-1-1z" fill="#185c37" />
        <path d="M15 12.500h9V17h-9z" fill="#107c41" />
        <rect y="6" width="12" height="12" rx="1" fill="#107c41" />
        <path d="M3.500 8.500l5 7M8.500 8.500l-5 7" stroke="#fff" strokeWidth="1.700" />
      </svg>
    ),
  },
];

function Tray() {
  return (
    <div className="ml-auto flex h-full shrink-0 items-center text-xs">
      <button className="flex items-center gap-[7px] text-[13px]">
        <svg width="26" height="26" viewBox="0 0 26 26">
          <path d="M6 16a5 5 0 0 1-.5-9.800A7.500 7.500 0 0 1 19.500 6 5 5 0 0 1 21 16z" fill="#b3c7e6" />
          <path d="M6 16a5 5 0 0 1-.5-9.800C8 5 12 7 12 10s5 2 9 6z" fill="#d5e0f2" opacity=".7" />
          <path d="M1 19.500h24M1 23.500h24" stroke="#7f98bd" strokeWidth="1.800" />
        </svg>
        10°C
      </button>
      <button aria-label="Show hidden icons" className="ml-[25px]">
        <svg width="13" height="8" viewBox="0 0 13 8" fill="none" stroke="#fff" strokeWidth="1.400">
          <path d="M.8 7.200L6.500 1.500l5.700 5.700" />
        </svg>
      </button>
      <svg width="12" height="16" viewBox="0 0 12 16" className="ml-[11px]">
        <rect width="12" height="16" rx="5.500" fill="#0a84ff" />
        <path d="M3 5l6 5.500L6 13V3l3 2.500L3 11" fill="none" stroke="#fff" />
      </svg>
      <svg width="18" height="17" viewBox="0 0 18 17" fill="none" className="ml-2.5">
        <path d="M9 14.500H.8V4L16 .8V8" stroke="#fff" strokeWidth="1.200" />
        <path d="M5 8c0-2 3-3 5-1.500M10.500 4.500v2.500H8M10.500 8.500c0 2-3 3-5 1.500M5 12V9.500h2.500" stroke="#fff" />
        <circle cx="13" cy="13" r="3.800" fill="#f7941d" />
      </svg>
      <svg width="16" height="10" viewBox="0 0 16 10" fill="none" className="ml-[7px]">
        <path d="M.7.700h13v8h-13zM14.500 3v4" stroke="#fff" strokeWidth="1.400" />
        <path d="M2.500 2.500h4.500v4.500H2.500z" fill="#fff" />
      </svg>
      <svg width="17" height="17" viewBox="0 0 17 17" className="ml-[7px]">
        <path d="M2 14.500q1-3 3-3.500l4 3q-2 2-7 .5Z" fill="#d8d8d8" />
        <path d="M2 1c5-.5 14 6 14 12.500-4 2-10 .5-12.500-3S0 3 2 1Z" fill="#1a1a1a" stroke="#9a9a9a" />
        <path d="M7.500 8.500L13 3.500" stroke="#ddd" strokeWidth="1.400" />
      </svg>
      <svg width="15" height="15" viewBox="0 0 15 15" fill="none" stroke="#fff" className="ml-2.5">
        <path d="M1 13C1 6.500 6.500 1 13.500 1" opacity=".6" />
        <path d="M4 13.500C4 8.500 8 4.500 13.500 4.500M7 13.500c0-3 2.500-5.500 6.500-5.500M10 13.500c0-1.500 1.500-2.500 3.500-2.500" strokeWidth="1.300" />
        <circle cx="12.500" cy="13" r="1" fill="#fff" />
      </svg>
      <svg width="17" height="17" viewBox="0 0 17 17" className="ml-1.5">
        <path d="M7.500 1C9.500 2 12 2.500 14.500 2.500 14.500 9 12.500 13 7.500 15.500 2.500 13 .7 9 .7 2.500 3.500 2.500 5.500 2 7.500 1Z" fill="#222" stroke="#fff" strokeWidth="1.200" />
        <path d="M7.500 1C5.500 2 3.500 2.500.7 2.500V8h6.800zM7.500 8h6.500c-1 4-3.500 6-6.500 7.500z" fill="#fff" />
        <circle cx="12" cy="12" r="4.500" fill="#d9242c" />
        <path d="M10.200 10.200l3.600 3.600M13.800 10.200l-3.600 3.600" stroke="#fff" strokeWidth="1.200" />
      </svg>
      <svg width="17" height="14" viewBox="0 0 17 14" fill="none" stroke="#fff" className="ml-2">
        <path d="M.7 5h2.500L6.500 1.500v11L3.200 9H.7zM9 4.500q1.500 2.500 0 5M11.500 2.500q3 4.500 0 9M14 .8q4 6.200 0 12.400" strokeWidth="1.100" />
      </svg>
      <button className="ml-[9px]">ENG</button>
      <button className="w-[82px] text-center text-[11px] leading-[18px]">
        12:51
        <br />
        18/01/2024
      </button>
      <button aria-label="Notifications" className="relative mr-[14px] ml-[5px]">
        <svg width="22" height="26" viewBox="0 0 22 26">
          <path d="M1 4h16v13H7l-3 3v-3H1z" fill="#fff" />
          <path d="M4 7.500h10M4 10.500h10M4 13.500h7" stroke="#22334a" />
        </svg>
        <span className="absolute top-[11px] left-2 h-4 w-4 rounded-full border border-[#8b93a0] bg-[#333c47] text-center text-[11px] leading-[14px]">
          3
        </span>
      </button>
      <div className="mr-1 h-full w-px bg-[#6b7788]" />
    </div>
  );
}

function Taskbar() {
  return (
    <footer className="flex h-10 shrink-0 items-center overflow-hidden bg-gradient-to-r from-[#21353d] via-[#20323f] to-[#1b2742] text-white">
      <button aria-label="Start" className="flex w-12 shrink-0 justify-center">
        <svg width="16" height="16" viewBox="0 0 16 16" fill="#fff">
          <path d="M0 2.300L6.600 1.400v6.200H0zM7.400 1.300L16 0v7.600H7.400zM0 8.400h6.600v6.200L0 13.700zM7.400 8.400H16V16l-8.600-1.300z" />
        </svg>
      </button>
      <label className="flex h-10 w-72 shrink-0 items-center border border-[#c9c9c9] bg-[#f2f2f2]">
        <svg width="17" height="17" viewBox="0 0 17 17" fill="none" stroke="#222" strokeWidth="1.300" className="ml-[11px]">
          <circle cx="10.500" cy="6.500" r="5.500" />
          <path d="M6.500 10.500L.8 16.200" />
        </svg>
        <input
          aria-label="Type here to search"
          placeholder="Type here to search"
          className="ml-[11px] w-0 flex-1 bg-transparent text-sm outline-none placeholder:text-[#444]"
        />
        <Bridge />
      </label>
      <button aria-label="Task view" className="ml-4">
        <svg width="17" height="17" viewBox="0 0 17 17" fill="none" stroke="#fff" strokeWidth="1.200">
          <path d="M.8 0v3.500h9.500V0M.8 17v-3.500h9.500V17M.8 5.500h9.500v6H.8zM14.500 0v3M14.500 8v9" />
          <path d="M13 4h3v3h-3z" fill="#fff" stroke="none" />
        </svg>
      </button>
      <div className="mr-[13px] ml-[21px] flex gap-0.5">
        <i className="h-4 w-px bg-[#5f6f77]" />
        <i className="h-4 w-px bg-[#5f6f77]" />
      </div>
      <div className="flex h-full w-[433px] shrink-0 justify-between">
        {APPS.map((app) => (
          <button
            key={app.name}
            aria-label={app.name}
            className={`flex h-full w-[42px] items-center justify-center ${app.className ?? ""}`}
          >
            {app.icon}
          </button>
        ))}
      </div>
      <div className="ml-[9px] flex shrink-0 items-center">
        <div className="h-[25px] w-[55px] border border-white bg-black p-px">
          <div className="flex h-full items-center justify-center bg-[linear-gradient(90deg,#0f8f38_53%,#0a0a0a_53%)] text-[13px]">
            1:54
          </div>
        </div>
        <div className="h-[13px] w-[3px] border border-l-0 border-white bg-black" />
      </div>
      <Tray />
    </footer>
  );
}

export default function App() {
  return (
    <div className={`flex h-screen flex-col overflow-hidden bg-[#e6e6e6] text-[#444] ${UI}`}>
      <TitleBar />
      <div className="shrink-0 bg-[#f3f2f1]">
        <Tabs />
        <Ribbon />
      </div>
      <FormulaBar />
      <Sheet />
      <SheetTabs />
      <StatusBar />
      <Taskbar />
    </div>
  );
}
